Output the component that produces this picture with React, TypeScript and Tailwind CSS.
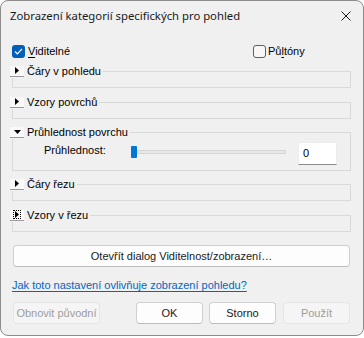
import React from 'react';

function Expander({ open = false, focus = false }: { open?: boolean; focus?: boolean }) {
  return (
    <div className="flex h-[11px] w-[14px] items-center justify-center border-b border-[#9b9b9b] bg-[#f9f9f9]">
      <div className={`flex h-[9px] w-[8px] items-center justify-center ${focus ? 'border border-dotted border-black' : ''}`}>
        {open ? (
          <svg width="7" height="4" viewBox="0 0 7 4">
            <path d="M0 0 H7 L3.5 4 Z" fill="#000" />
          </svg>
        ) : (
          <svg width="4" height="7" viewBox="0 0 4 7">
            <path d="M0 0 V7 L4 3.5 Z" fill="#000" />
          </svg>
        )}
      </div>
    </div>
  );
}

function Section({
  label,
  open,
  focus,
  className = '',
  children,
}: {
  label: string;
  open?: boolean;
  focus?: boolean;
  className?: string;
  children?: React.ReactNode;
}) {
  return (
    <div className={`relative ml-[11px] mr-[12px] border border-[#d9d9d9] ${className}`}>
      <div className="absolute -left-[3px] -top-[8px] flex h-[14px] items-center bg-[#f0f0f0] pr-[2px]">
        <Expander open={open} focus={focus} />
        <span className="ml-[3px] leading-[14px]">{label}</span>
      </div>
      {children}
    </div>
  );
}

function Btn({
  children,
  className = '',
  disabled,
}: {
  children: React.ReactNode;
  className?: string;
  disabled?: boolean;
}) {
  const look = disabled
    ? 'border-[#e5e5e5] bg-[#f5f5f5] text-[#9d9d9d]'
    : 'border-[#d0d0d0] border-b-[#bcbcbc] bg-[#fdfdfd] text-[#1a1a1a]';
  return (
    <button
      type="button"
      className={`flex h-[22px] items-center justify-center whitespace-nowrap rounded-[4px] border ${look} ${className}`}
    >
      {children}
    </button>
  );
}

export default function App() {
  return (
    <div className="h-[338px] w-[364px] bg-white font-['Liberation_Sans',sans-serif] text-[11px] text-black">
      <div className="flex h-[336px] flex-col overflow-hidden rounded-[8px] border border-[#8c8c8c] bg-[#f0f0f0]">
        {/* title bar */}
        <div className="flex h-[30px] shrink-0 items-center justify-between pl-[9px] pr-[10px] text-[#1a1a1a]">
          <span className="font-['Noto_Sans',sans-serif] text-[11.3px]">Zobrazení kategorií specifických pro pohled</span>
          <svg width="10" height="10" viewBox="0 0 10 10" className="mr-[2px]">
            <path d="M0.5 0.5 L9.5 9.5 M9.5 0.5 L0.5 9.5" stroke="#1a1a1a" strokeWidth="1" />
          </svg>
        </div>

        {/* checkboxes */}
        <div className="mt-[14px] flex h-[13px] items-center pl-[11px]">
          <div className="flex w-[241px] items-center">
            <div className="flex h-[13px] w-[13px] items-center justify-center rounded-[3px] bg-[#005fb8]">
              <svg width="9" height="7" viewBox="0 0 9 7">
                <path d="M1 3.5 L3.3 5.8 L8 1" stroke="#fff" strokeWidth="1.2" fill="none" />
              </svg>
            </div>
            <span className="ml-[3px]">
              <span className="underline underline-offset-2">V</span>iditelné
            </span>
          </div>
          <div className="h-[13px] w-[13px] rounded-[3px] border border-[#5f5f5f] bg-[#f7f7f7]" />
          <span className="ml-[2px]">
            Pů<span className="underline underline-offset-2">l</span>tóny
          </span>
        </div>

        <Section label="Čáry v pohledu" className="mt-[13px] h-[17px]" />
        <Section label="Vzory povrchů" className="mt-[14px] h-[17px]" />
        <Section label="Průhlednost povrchu" open className="mt-[13px] h-[39px]">
          <div className="flex items-start pl-[31px] pt-[9px]">
            <span className="w-[87px] leading-[16px]">Průhlednost:</span>
            <div className="mt-[4px] flex h-[12px] w-[155px] items-center">
              <div className="h-[12px] w-[6px] rounded-[1px] bg-[#0078d4]" />
              <div className="h-[4px] flex-1 border border-[#d6d6d6] bg-[#e7e7e7]" />
            </div>
            <div className="ml-[12px] flex h-[23px] w-[39px] items-center border border-[#ececec] border-b-[#8a8a8a] bg-white pl-[4px]">
              0
            </div>
          </div>
        </Section>
        <Section label="Čáry řezu" className="mt-[13px] h-[17px]" />
        <Section label="Vzory v řezu" focus className="mt-[14px] h-[17px]" />

        <Btn className="ml-[12px] mr-[13px] mt-[13px]">Otevřít dialog Viditelnost/zobrazení…</Btn>

        <a href="#" className="ml-[11px] mt-[10px] self-start leading-[16px] text-[#0067c0] underline underline-offset-2">
          Jak toto nastavení ovlivňuje zobrazení pohledu?
        </a>

        <div className="ml-[12px] mt-[9px] flex">
          <Btn disabled className="w-[87px]">Obnovit původní</Btn>
          <Btn className="ml-[36px] w-[67px]">OK</Btn>
          <Btn className="ml-[6px] w-[67px]">Storno</Btn>
          <Btn disabled className="ml-[7px] w-[67px]">Použít</Btn>
        </div>
      </div>
    </div>
  );
}
